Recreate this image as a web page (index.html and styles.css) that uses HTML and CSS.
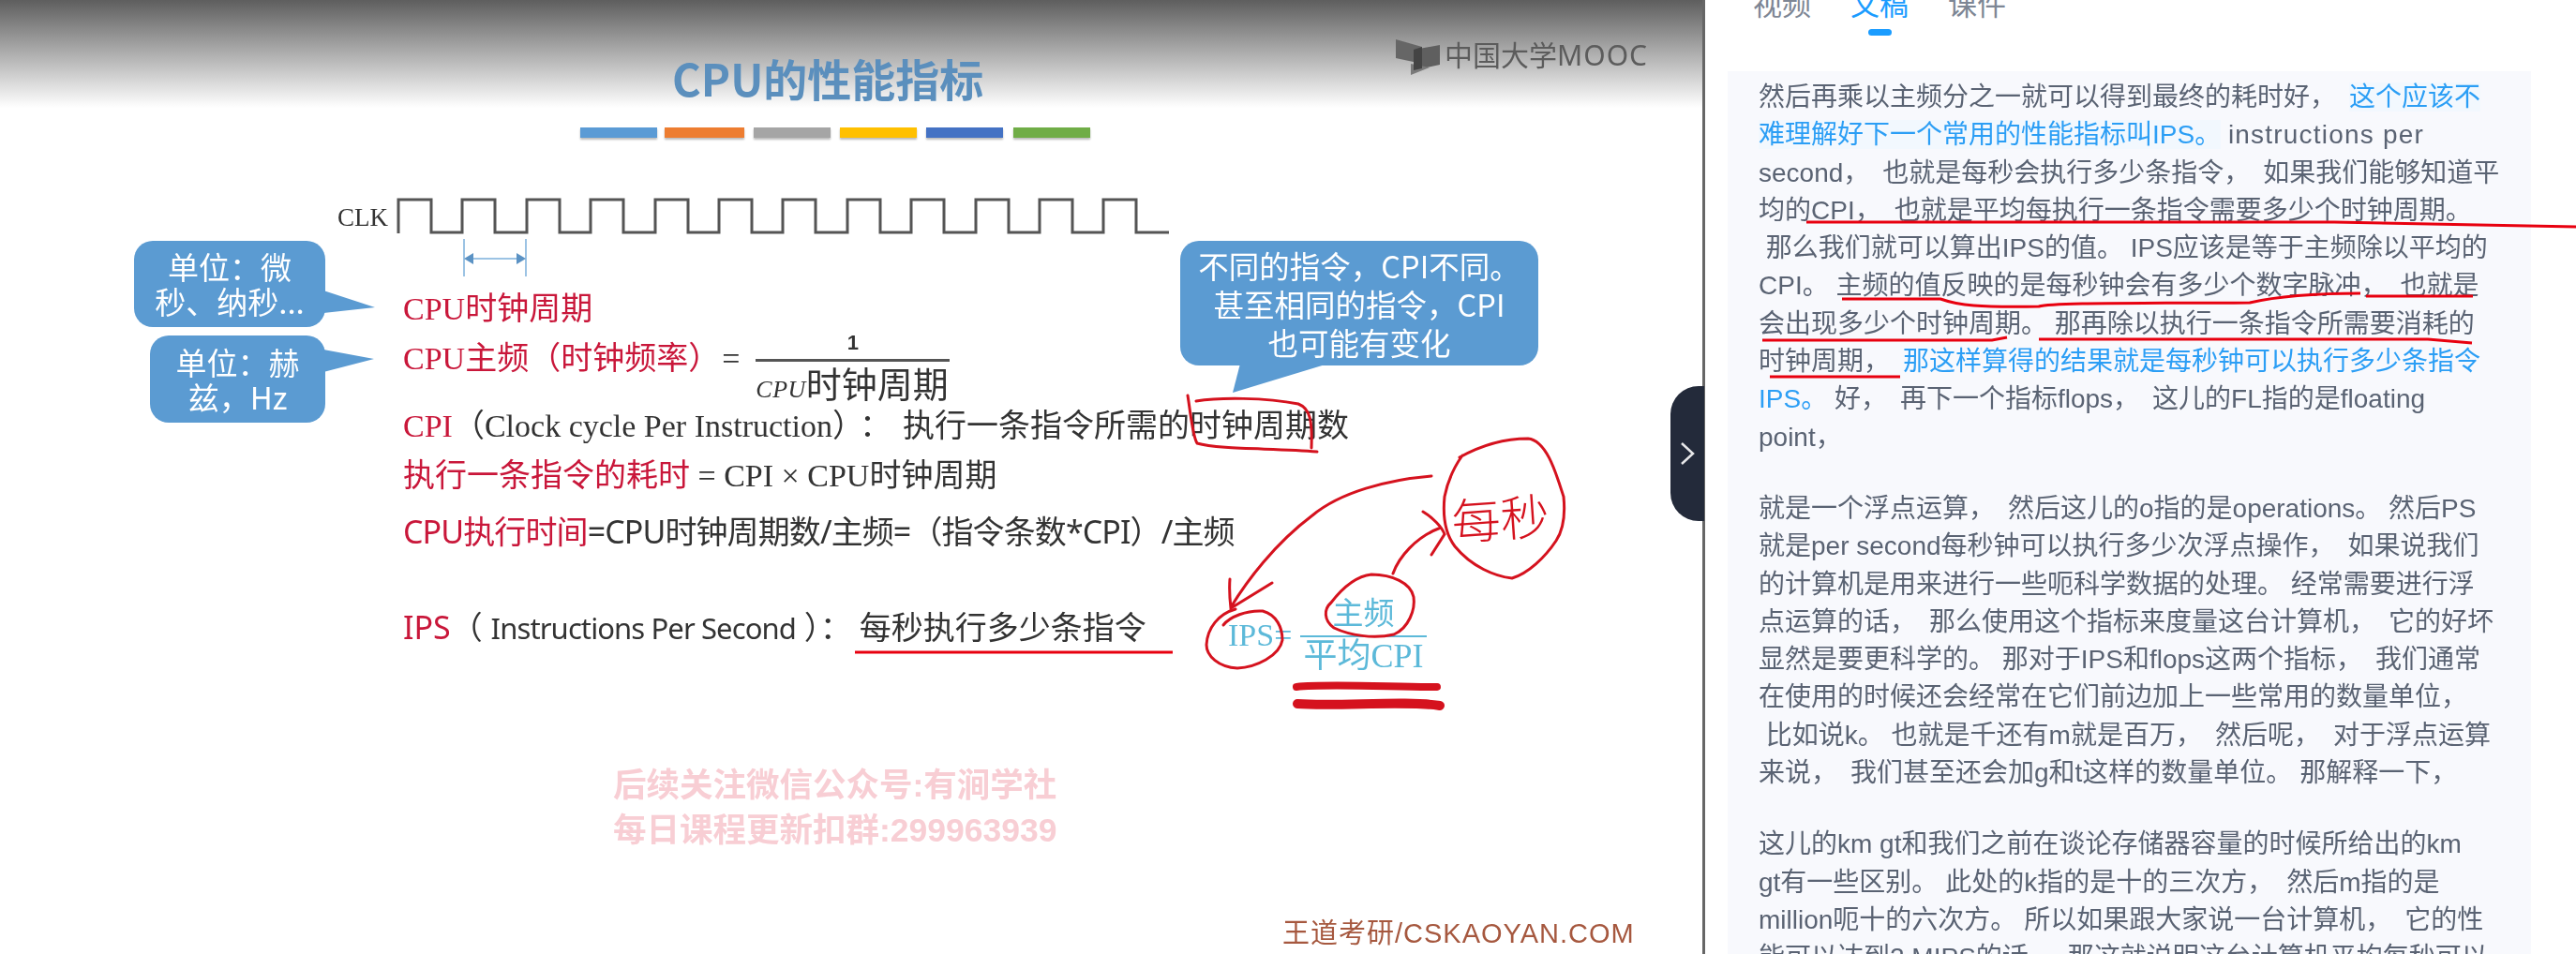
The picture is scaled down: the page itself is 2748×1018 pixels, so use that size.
FILE: index.html
```html
<!DOCTYPE html>
<html lang="zh-CN">
<head>
    <meta charset="UTF-8">
    <title>CPU的性能指标</title>
    <link rel="stylesheet" href="styles.css">
</head>
<body>

<div class="page">

    <!-- video slide -->
    <div class="slide">
        <div class="logo">
            <svg class="logo-mark" width="48" height="40" viewBox="0 0 48 40">
                <polygon points="1,1 29,9 29,27 1,21" fill="#666"/>
                <polygon points="20,12 48,7 48,28 20,34" fill="#5f5f5f"/>
                <polygon points="17,27 17,39 37,31" fill="#7a7a7a"/>
                <polygon points="20,12 29,9 29,32 20,34" fill="#444"/>
            </svg>
            <span class="logo-text">中国大学<span class="logo-latin">MOOC</span></span>
        </div>

        <h1 class="title">CPU的性能指标</h1>

        <div class="bars">
            <span class="bar bar-blue"></span>
            <span class="bar bar-orange"></span>
            <span class="bar bar-gray"></span>
            <span class="bar bar-yellow"></span>
            <span class="bar bar-navy"></span>
            <span class="bar bar-green"></span>
        </div>

        <div class="clock">
            <span class="clk">CLK</span>
            <svg width="826" height="86" viewBox="0 0 826 86">
                <path class="wave" d="M2 38V2H37V37H70V2H105V37H139V2H174V37H207V2H242V37H276V2H311V37H344V2H379V37H412V2H447V37H481V2H516V37H549V2H584V37H618V2H653V37H686V2H721V37H754V2H789V37H824"/>
                <path class="period" d="M72 44V84M138 44V84M76 65H134"/>
                <polygon class="period-head" points="72,65 82,59 82,71"/>
                <polygon class="period-head" points="138,65 128,59 128,71"/>
            </svg>
        </div>

        <div class="formulas">
            <div class="row row-first"><span class="red">CPU时钟周期</span></div>
            <div class="row row-freq">
                <span class="red">CPU主频（时钟频率）</span>
                <span class="eq">=</span>
                <div class="frac">
                    <span class="frac-top">1</span>
                    <span class="frac-bottom"><i class="frac-cpu">CPU</i>时钟周期</span>
                </div>
            </div>
            <div class="row"><span class="red">CPI</span>（Clock cycle Per Instruction<span class="cpi-colon">）：</span>执行一条指令所需的时钟周期数</div>
            <div class="row row-cost"><span class="red">执行一条指令的耗时</span> = CPI × CPU时钟周期</div>
            <div class="row row-time sans"><span class="red">CPU执行时间</span>=CPU时钟周期数/主频=（指令条数*CPI）/主频</div>
            <div class="row row-ips sans"><span class="red">IPS</span>（ <span class="ips-name">Instructions Per Second</span> ）<span class="ips-colon">：</span><span class="ips-text">每秒执行多少条指令</span></div>
        </div>

        <div class="watermark">
            <div>后续关注微信公众号:有涧学社</div>
            <div>每日课程更新扣群:299963939</div>
        </div>

        <div class="credit">王道考研/CSKAOYAN.COM</div>

        <!-- callouts sit on top of the slide -->
        <div class="callout callout-us">单位：微<br>秒、纳秒...</div>
        <div class="callout callout-hz">单位：赫<br>兹，Hz</div>
        <div class="callout callout-cpi">不同的指令，CPI不同。<br>甚至相同的指令，CPI<br>也可能有变化</div>

        <div class="mini mini-ips">IPS=</div>
        <div class="mini mini-frac">
            <span class="mini-top">主频</span>
            <span class="mini-bottom">平均CPI</span>
        </div>
    </div>

    <!-- right side -->
    <div class="side">
        <div class="tabs">
            <div class="tab">视频</div>
            <div class="tab tab-active">文稿</div>
            <div class="tab">课件</div>
        </div>

        <div class="transcript">
            <p>
                <span class="line">然后再乘以主频分之一就可以得到最终的耗时好，&ensp;<span class="hl">这个应该不</span></span>
                <span class="line"><span class="hl">难理解好下一个常用的性能指标叫IPS。</span> <span class="wide">instructions per</span></span>
                <span class="line">second，&ensp;也就是每秒会执行多少条指令，&ensp;如果我们能够知道平</span>
                <span class="line">均的CPI，&ensp;也就是平均每执行一条指令需要多少个时钟周期。</span>
                <span class="line"> 那么我们就可以算出IPS的值。 IPS应该是等于主频除以平均的</span>
                <span class="line">CPI。 主频的值反映的是每秒钟会有多少个数字脉冲，&ensp;也就是</span>
                <span class="line">会出现多少个时钟周期。 那再除以执行一条指令所需要消耗的</span>
                <span class="line">时钟周期，&ensp;<span class="blue">那这样算得的结果就是每秒钟可以执行多少条指令</span></span>
                <span class="line"><span class="blue">IPS。</span> 好，&ensp;再下一个指标flops，&ensp;这儿的FL指的是floating</span>
                <span class="line">point，</span>
            </p>
            <p>
                <span class="line">就是一个浮点运算，&ensp;然后这儿的o指的是operations。 然后PS</span>
                <span class="line">就是per second每秒钟可以执行多少次浮点操作，&ensp;如果说我们</span>
                <span class="line">的计算机是用来进行一些呃科学数据的处理。 经常需要进行浮</span>
                <span class="line">点运算的话，&ensp;那么使用这个指标来度量这台计算机，&ensp;它的好坏</span>
                <span class="line">显然是要更科学的。 那对于IPS和flops这两个指标，&ensp;我们通常</span>
                <span class="line">在使用的时候还会经常在它们前边加上一些常用的数量单位，</span>
                <span class="line"> 比如说k。 也就是千还有m就是百万，&ensp;然后呢，&ensp;对于浮点运算</span>
                <span class="line">来说，&ensp;我们甚至还会加g和t这样的数量单位。 那解释一下，</span>
            </p>
            <p>
                <span class="line">这儿的km gt和我们之前在谈论存储器容量的时候所给出的km</span>
                <span class="line">gt有一些区别。 此处的k指的是十的三次方，&ensp;然后m指的是</span>
                <span class="line">million呃十的六次方。 所以如果跟大家说一台计算机，&ensp;它的性</span>
                <span class="line">能可以达到2 MIPS的话，&ensp;那这就说明这台计算机平均每秒可以</span>
            </p>
        </div>
    </div>

    <!-- collapse button on the slide edge -->
    <div class="collapse">
        <svg width="16" height="26" viewBox="0 0 16 26">
            <path d="M2 2L14 13L2 24" fill="none" stroke="#e8e8ea" stroke-width="2.5"/>
        </svg>
    </div>

    <!-- pen marks drawn over everything -->
    <svg class="ink" width="2748" height="1018" viewBox="0 0 2748 1018">
        <g class="pen">
            <path d="M1267 422C1270 440 1272 465 1277 473C1300 480 1360 478 1405 482M1276 428C1300 424 1350 424 1385 431C1398 436 1400 450 1399 478"/>
            <path d="M1557 488C1575 478 1600 468 1630 468C1650 470 1660 505 1668 530C1670 550 1668 565 1660 577C1648 595 1630 612 1613 617C1595 615 1570 605 1552 583C1542 570 1539 550 1541 530C1544 515 1550 500 1560 486"/>
            <path d="M1527 508C1480 512 1430 525 1400 550C1360 580 1330 620 1313 648M1312 618C1311 630 1312 640 1313 649L1357 622"/>
            <path d="M1305 667C1312 658 1330 651 1347 652C1362 656 1368 670 1368 683C1365 700 1340 712 1320 713C1300 712 1287 700 1287 688C1288 670 1300 655 1318 650"/>
            <path d="M1420 643C1412 650 1412 662 1423 670C1440 678 1465 682 1487 677C1503 670 1510 650 1508 637C1505 622 1485 613 1463 613C1445 615 1430 630 1420 643"/>
            <path d="M1486 612C1492 595 1510 573 1537 563M1518 546C1528 552 1538 562 1541 570L1527 592"/>
            <path class="pen-thick" d="M1383 733C1420 729 1500 734 1533 733"/>
            <path class="pen-fat" d="M1384 751C1430 754 1500 747 1536 753"/>
        </g>
        <text class="pen-text" x="1548" y="573" transform="rotate(-4 1600 545)">每秒</text>
        <g class="marker">
            <path d="M912 696H1251"/>
            <path d="M1927 237H2490L2748 242"/>
            <path d="M1965 319H2070C2090 326 2110 328 2175 327C2190 322 2300 324 2400 323C2430 316 2470 313 2518 313"/>
            <path d="M2524 316H2638"/>
            <path d="M1880 363H2125L2141 360"/>
            <path d="M2175 362H2590L2637 366"/>
            <path d="M1888 402H2027"/>
        </g>
    </svg>
</div>

</body>
</html>
```

FILE: styles.css
```css
* {
    box-sizing: border-box;
}

body {
    margin: 0;
    background: #fff;
}

.page {
    position: relative;
    display: flex;
    width: 2748px;
    height: 1018px;
    overflow: hidden;
    font-family: "Liberation Sans", "Noto Sans CJK SC", sans-serif;
}

/* slide */
.slide {
    position: relative;
    flex: none;
    width: 1819px;
    height: 1018px;
    border-right: 3px solid #666;
    background: linear-gradient(#5e5e5e 0, #fff 115px) no-repeat, #fefefe;
    filter: blur(0.7px);
}

.logo {
    position: absolute;
    top: 41px;
    left: 1488px;
    display: flex;
    align-items: flex-start;
    gap: 5px;
}

.logo-text {
    font-family: "Noto Sans", "Noto Sans CJK SC", sans-serif;
    font-size: 30px;
    line-height: 36px;
    color: #5c5c5c;
}

.logo-latin {
    letter-spacing: 1px;
}

.title {
    margin: 0 0 0 717px;
    padding-top: 53px;
    font-family: "Noto Sans CJK SC", sans-serif;
    font-size: 47px;
    line-height: 60px;
    font-weight: 700;
    color: #5b8fbd;
}

.bars {
    display: flex;
    margin: 23px 0 0 619px;
}

.bar {
    height: 11px;
    width: 82px;
    margin-right: 8px;
    box-shadow: 0 2px 2px #bbb;
}

.bar-blue { background: #5b9bd5; }
.bar-orange { background: #ed7d31; width: 85px; margin-right: 10px; }
.bar-gray { background: #a5a5a5; margin-right: 10px; }
.bar-yellow { background: #ffc000; margin-right: 10px; }
.bar-navy { background: #4472c4; margin-right: 11px; }
.bar-green { background: #70ad47; }

.clock {
    display: flex;
    margin: 64px 0 0 360px;
}

.clk {
    width: 63px;
    font-family: "Liberation Serif", serif;
    font-size: 27px;
    line-height: 42px;
    color: #333;
}

.wave {
    fill: none;
    stroke: #555;
    stroke-width: 3;
}

.period {
    fill: none;
    stroke: #9cc3e4;
    stroke-width: 2;
}

.period-head {
    fill: #5b92c4;
}

.formulas {
    margin: 8px 0 0 430px;
    font-family: "Liberation Serif", "Noto Sans CJK SC", serif;
    font-size: 34px;
    color: #333;
}

.sans {
    font-family: "Noto Sans", "Noto Sans CJK SC", sans-serif;
}

.red {
    color: #c9173a;
}

.row {
    line-height: 50px;
    white-space: pre;
}

.row-freq {
    display: flex;
    height: 75px;
    line-height: 56px;
}

.row-cost { margin-top: 3px; }
.row-time { margin-top: 9px; letter-spacing: -0.9px; }
.row-ips { margin-top: 52px; }

.cpi-colon {
    letter-spacing: 12px;
}

.ips-name {
    font-size: 31px;
    letter-spacing: -0.9px;
}

.ips-colon {
    margin-right: 8px;
}

.eq {
    margin-left: 2px;
}

.frac {
    display: flex;
    flex-direction: column;
    align-items: center;
    width: 207px;
    margin: -6px 0 0 17px;
}

.frac-top {
    width: 100%;
    line-height: 34px;
    font-family: "Liberation Sans", sans-serif;
    font-size: 22px;
    font-weight: 700;
    text-align: center;
    border-bottom: 3px solid #555;
}

.frac-bottom {
    width: 100%;
    line-height: 50px;
    font-size: 38px;
}

.frac-cpu {
    font-size: 26px;
    letter-spacing: 0.5px;
}

.watermark {
    margin: 119px 0 0 654px;
    font-family: "Liberation Sans", "Noto Sans CJK SC", sans-serif;
    font-size: 35.5px;
    line-height: 48px;
    font-weight: 700;
    color: #f8ced4;
}

.credit {
    margin: 66px 0 0 1368px;
    font-size: 29px;
    line-height: 40px;
    letter-spacing: 1px;
    color: #a6583f;
}

/* blue speech bubbles */
.callout {
    position: absolute;
    display: flex;
    align-items: center;
    justify-content: center;
    text-align: center;
    border-radius: 20px;
    background: #5b9bd2;
    color: #fff;
    font-family: "Noto Sans CJK SC", sans-serif;
    font-size: 33px;
    line-height: 37px;
}

.callout::after {
    content: "";
    position: absolute;
    background: #5b9bd2;
}

.callout-us {
    top: 257px;
    left: 143px;
    width: 204px;
    height: 92px;
}

.callout-us::after {
    top: 53px;
    left: 202px;
    width: 55px;
    height: 24px;
    clip-path: polygon(0 0, 100% 18px, 0 100%);
}

.callout-hz {
    top: 358px;
    left: 160px;
    width: 187px;
    height: 93px;
}

.callout-hz::after {
    top: 15px;
    left: 185px;
    width: 54px;
    height: 24px;
    clip-path: polygon(0 0, 100% 10px, 0 100%);
}

.callout-cpi {
    top: 257px;
    left: 1259px;
    width: 382px;
    height: 133px;
    font-size: 32.5px;
    line-height: 41px;
}

.callout-cpi::after {
    top: 131px;
    left: 56px;
    width: 102px;
    height: 31px;
    clip-path: polygon(8px 0, 100% 0, 0 100%);
}

/* teal formula next to the pen marks */
.mini {
    position: absolute;
    font-family: "Liberation Serif", "Noto Sans CJK SC", serif;
    color: #5cb9d9;
}

.mini-ips {
    top: 658px;
    left: 1310px;
    font-size: 34px;
    line-height: 40px;
}

.mini-frac {
    top: 632px;
    left: 1387px;
    display: flex;
    flex-direction: column;
    align-items: center;
    width: 135px;
}

.mini-top {
    width: 100%;
    font-size: 33px;
    line-height: 46px;
    text-align: center;
    border-bottom: 2px solid #5cb9d9;
}

.mini-bottom {
    font-size: 36px;
    line-height: 40px;
    white-space: nowrap;
}

/* right side */
.side {
    flex: 1;
    min-width: 0;
}

.tabs {
    display: flex;
    gap: 42px;
    margin: -15px 0 0 51px;
}

.tab {
    display: flex;
    flex-direction: column;
    align-items: center;
    font-family: "Noto Sans CJK SC", sans-serif;
    font-size: 31px;
    line-height: 36px;
    color: #7d8694;
}

.tab-active {
    color: #1a9cff;
}

.tab-active::after {
    content: "";
    width: 25px;
    height: 7px;
    margin-top: 10px;
    border-radius: 4px;
    background: #1a9cff;
}

.tab:not(.tab-active) {
    padding-bottom: 17px;
}

.transcript {
    width: 857px;
    height: 1000px;
    margin: 38px 0 0 24px;
    padding: 8px 0 0 33px;
    background: #f8f9fd;
    font-family: "Liberation Sans", "Noto Sans CJK SC", sans-serif;
    font-size: 28px;
    line-height: 40.3px;
    color: #5a6373;
    filter: blur(0.4px);
}

.transcript p {
    margin: 0 0 36px;
}

.line {
    display: block;
    white-space: pre;
}

.hl {
    color: #2b9ef5;
    background: #f2f8fe;
}

.blue {
    color: #2b9ef5;
}

.wide {
    letter-spacing: 1.2px;
}

/* button */
.collapse {
    position: absolute;
    top: 412px;
    left: 1782px;
    display: flex;
    align-items: center;
    justify-content: center;
    width: 36px;
    height: 144px;
    border-radius: 30px 0 0 30px;
    background: #232a3a;
}

/* pen marks */
.ink {
    position: absolute;
    top: 0;
    left: 0;
    pointer-events: none;
}

.pen {
    fill: none;
    stroke: #d5121e;
    stroke-width: 3;
    stroke-linecap: round;
    filter: blur(0.5px);
}

.pen-thick {
    stroke-width: 8;
}

.pen-fat {
    stroke-width: 10;
}

.pen-text {
    font-family: "Noto Sans CJK SC", sans-serif;
    font-size: 52px;
    font-weight: 300;
    fill: #d5121e;
}

.marker {
    fill: none;
    stroke: #e8000f;
    stroke-width: 3;
}
```
